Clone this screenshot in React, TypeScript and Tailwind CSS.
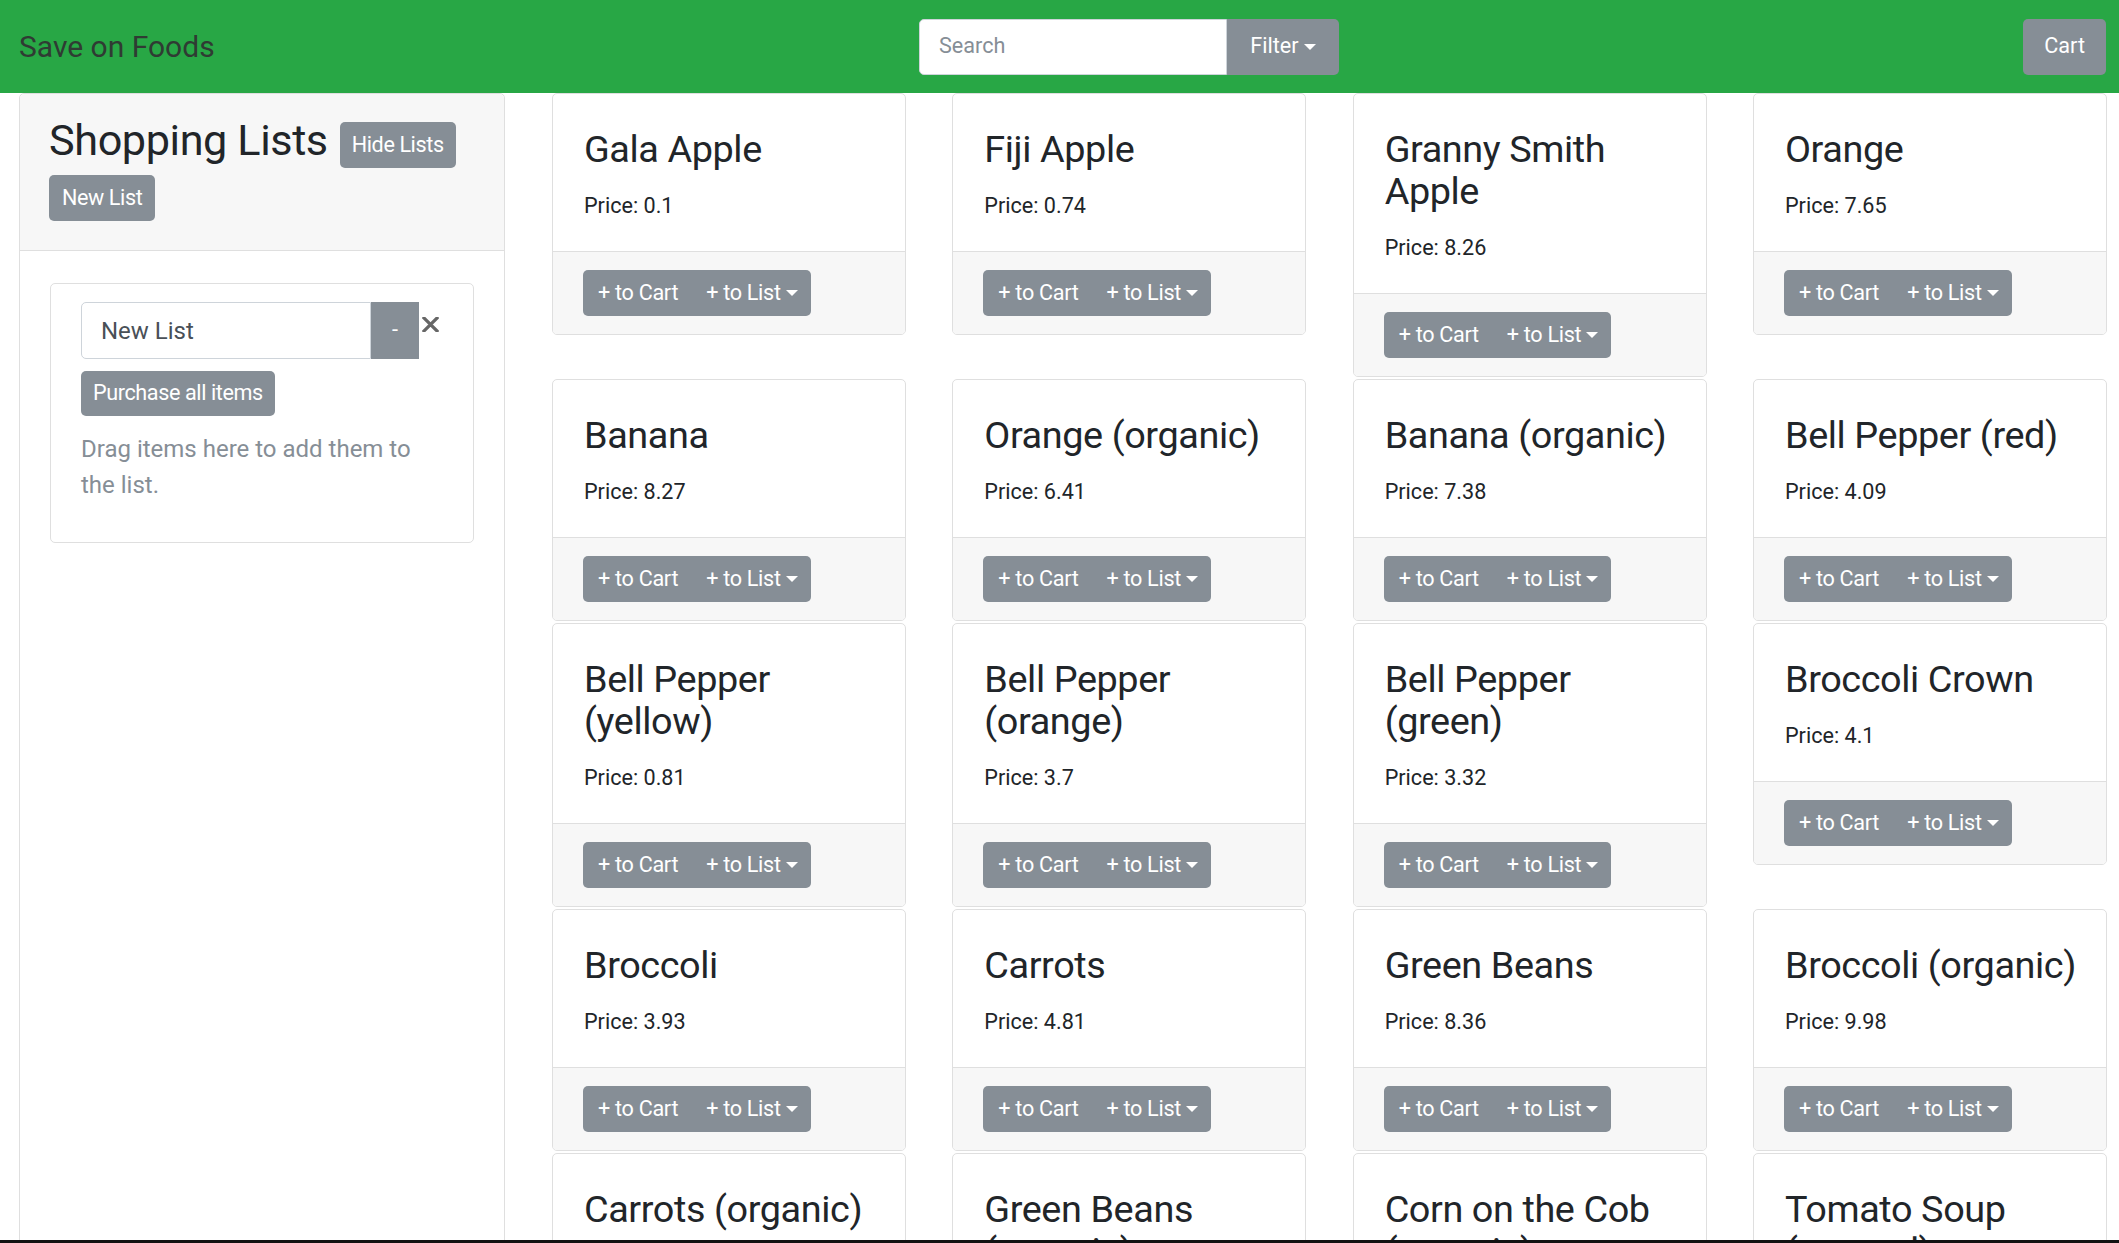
import React from "react";

const products: [string, string][] = [
  ["Gala Apple", "0.1"],
  ["Fiji Apple", "0.74"],
  ["Granny Smith Apple", "8.26"],
  ["Orange", "7.65"],
  ["Banana", "8.27"],
  ["Orange (organic)", "6.41"],
  ["Banana (organic)", "7.38"],
  ["Bell Pepper (red)", "4.09"],
  ["Bell Pepper (yellow)", "0.81"],
  ["Bell Pepper (orange)", "3.7"],
  ["Bell Pepper (green)", "3.32"],
  ["Broccoli Crown", "4.1"],
  ["Broccoli", "3.93"],
  ["Carrots", "4.81"],
  ["Green Beans", "8.36"],
  ["Broccoli (organic)", "9.98"],
  ["Carrots (organic)", "5.12"],
  ["Green Beans (organic)", "9.4"],
  ["Corn on the Cob (organic)", "2.67"],
  ["Tomato Soup (canned)", "1.99"],
];

function Caret({ className = "" }: { className?: string }) {
  return (
    <span
      className={
        "inline-block w-0 h-0 border-l-[6.5px] border-r-[6.5px] border-t-[6.5px] border-l-transparent border-r-transparent border-t-white " +
        className
      }
    />
  );
}

function ProductCard({ name, price }: { name: string; price: string }) {
  return (
    <div className="w-full border border-[#dfdfdf] rounded-[5px] bg-white overflow-hidden">
      <div className="pt-[34px] pl-[31px] pr-[16px] pb-[29px]">
        <h3 className="text-[37.8px] leading-[42px] tracking-[-0.4px] font-normal text-[#212529]">{name}</h3>
        <p className="mt-[20px] text-[21.6px] leading-[32px] text-[#212529]">Price: {price}</p>
      </div>
      <div className="border-t border-[#dfdfdf] bg-[#f7f7f7] pt-[18px] pb-[18px] pl-[30px]">
        <div className="inline-flex h-[46px] rounded-[5px] bg-[#868e96] text-white text-[21.6px] tracking-[-0.3px]">
          <button className="pl-[15px] pr-[14px] flex items-center">+ to Cart</button>
          <button className="pl-[14px] pr-[13px] flex items-center">
            + to List
            <Caret className="ml-[5px]" />
          </button>
        </div>
      </div>
    </div>
  );
}

export default function App() {
  return (
    <div className="relative w-full h-[1243px] overflow-hidden bg-white font-['Roboto',sans-serif] text-[#212529]">
      {/* Navbar */}
      <nav className="h-[93px] bg-[#28a745] flex items-center pl-[19px] pr-[13px]">
        <div className="w-[900px] text-[30px] text-[#2f3b33]">Save on Foods</div>
        <div className="flex h-[56px]">
          <div className="w-[308px] bg-white border border-[#ced4da] rounded-l-[5px] pl-[19px] flex items-center text-[21.6px] text-[#868e96]">
            Search
          </div>
          <button className="w-[112px] bg-[#868e96] rounded-r-[5px] text-white text-[21.6px] flex items-center justify-center">
            Filter
            <Caret className="ml-[5px]" />
          </button>
        </div>
        <div className="flex-1" />
        <button className="h-[56px] px-[21px] bg-[#868e96] rounded-[5px] text-white text-[21.6px]">Cart</button>
      </nav>

      {/* Main */}
      <div className="flex pl-[19px]">
        {/* Sidebar */}
        <aside className="w-[486px] shrink-0 border border-[#dfdfdf] rounded-t-[5px] min-h-[1160px]">
          <div className="bg-[#f7f7f7] border-b border-[#dfdfdf] pt-[18px] pl-[29px] pb-[29px] rounded-t-[5px]">
            <div className="flex items-start">
              <h2 className="mt-[3px] text-[43.2px] leading-[52px] tracking-[-0.4px] font-normal text-[#212529]">
                Shopping Lists
              </h2>
              <button className="ml-[12px] mt-[10px] h-[46px] px-[12px] bg-[#868e96] text-white text-[21.6px] tracking-[-0.4px] rounded-[5px]">
                Hide Lists
              </button>
            </div>
            <button className="mt-[7px] h-[46px] px-[13px] bg-[#868e96] text-white text-[21.6px] tracking-[-0.4px] rounded-[5px]">
              New List
            </button>
          </div>
          <div className="px-[30px] pt-[32px]">
            <div className="border border-[#dfdfdf] rounded-[5px] pt-[18px] pl-[30px] pr-[30px] pb-[39px]">
              <div className="flex items-start">
                <div className="w-[290px] h-[57px] border border-[#ced4da] rounded-l-[5px] pl-[19px] flex items-center text-[24px] text-[#495057]">
                  New List
                </div>
                <button className="w-[48px] h-[57px] bg-[#868e96] text-white text-[21.6px] flex items-center justify-center">
                  -
                </button>
                <svg className="ml-[3px] mt-[15px]" width="17" height="15" viewBox="0 0 17 15">
                  <path d="M2 1 L15 14 M15 1 L2 14" stroke="#666" strokeWidth="3.2" strokeLinecap="square" />
                </svg>
              </div>
              <button className="mt-[12px] h-[45px] px-[12px] bg-[#868e96] text-white text-[21.6px] tracking-[-0.4px] rounded-[5px]">
                Purchase all items
              </button>
              <p className="mt-[15px] text-[24px] leading-[36px] text-[#868e96]">
                Drag items here to add them to the list.
              </p>
            </div>
          </div>
        </aside>

        {/* Products */}
        <div className="ml-[47px] w-[1555px] grid grid-cols-4 gap-x-[46.33px] gap-y-[2px] items-start">
          {products.map(([n, p]) => (
            <ProductCard key={n} name={n} price={p} />
          ))}
        </div>
      </div>

      <div className="absolute left-0 right-0 bottom-0 h-[3px] bg-[#111]" />
    </div>
  );
}
